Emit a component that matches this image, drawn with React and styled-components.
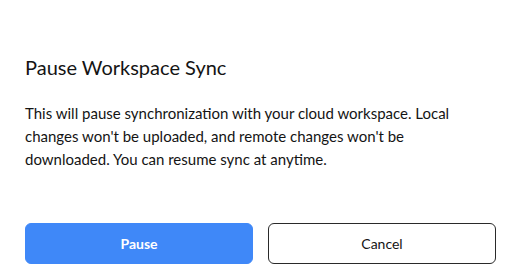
import styled, { createGlobalStyle } from 'styled-components'

const GlobalStyle = createGlobalStyle`
    html, body {
        margin: 0;
        padding: 0;
        background: #ffffff;
        font-family: Lato, "Open Sans", sans-serif;
    }
`

export default function App() {
    return (
        <>
            <GlobalStyle />
            <DialogStyled>
                <h2 className="title">Pause Workspace Sync</h2>
                <p className="message">
                    This will pause synchronization with your cloud workspace. Local
                    changes won't be uploaded, and remote changes won't be
                    downloaded. You can resume sync at anytime.
                </p>
                <div className="actions">
                    <Button $primary>Pause</Button>
                    <Button>Cancel</Button>
                </div>
            </DialogStyled>
        </>
    )
}

const DialogStyled = styled.div`
    display: flex;
    flex-direction: column;
    width: 528px;
    height: 275px;
    box-sizing: border-box;
    padding: 53px 32px 0 25px;
    color: #141414;
    .title {
        margin: 0;
        font-size: 20px;
        font-weight: 400;
        line-height: 28px;
    }
    .message {
        margin: 21px 0 0 0;
        font-size: 15px;
        line-height: 23px;
        max-width: 460px;
    }
    .actions {
        display: grid;
        grid-template-columns: 1fr 1fr;
        gap: 15px;
        margin-top: 52px;
    }
`

const Button = styled.button`
    height: 41px;
    border-radius: 6px;
    font-family: Lato, "Open Sans", sans-serif;
    font-size: 14px;
    font-weight: ${p => (p.$primary ? 700 : 400)};
    cursor: pointer;
    background: ${p => (p.$primary ? '#3f88f8' : '#ffffff')};
    color: ${p => (p.$primary ? '#ffffff' : '#141414')};
    border: 1px solid ${p => (p.$primary ? '#3f88f8' : '#2a2a2a')};
`
